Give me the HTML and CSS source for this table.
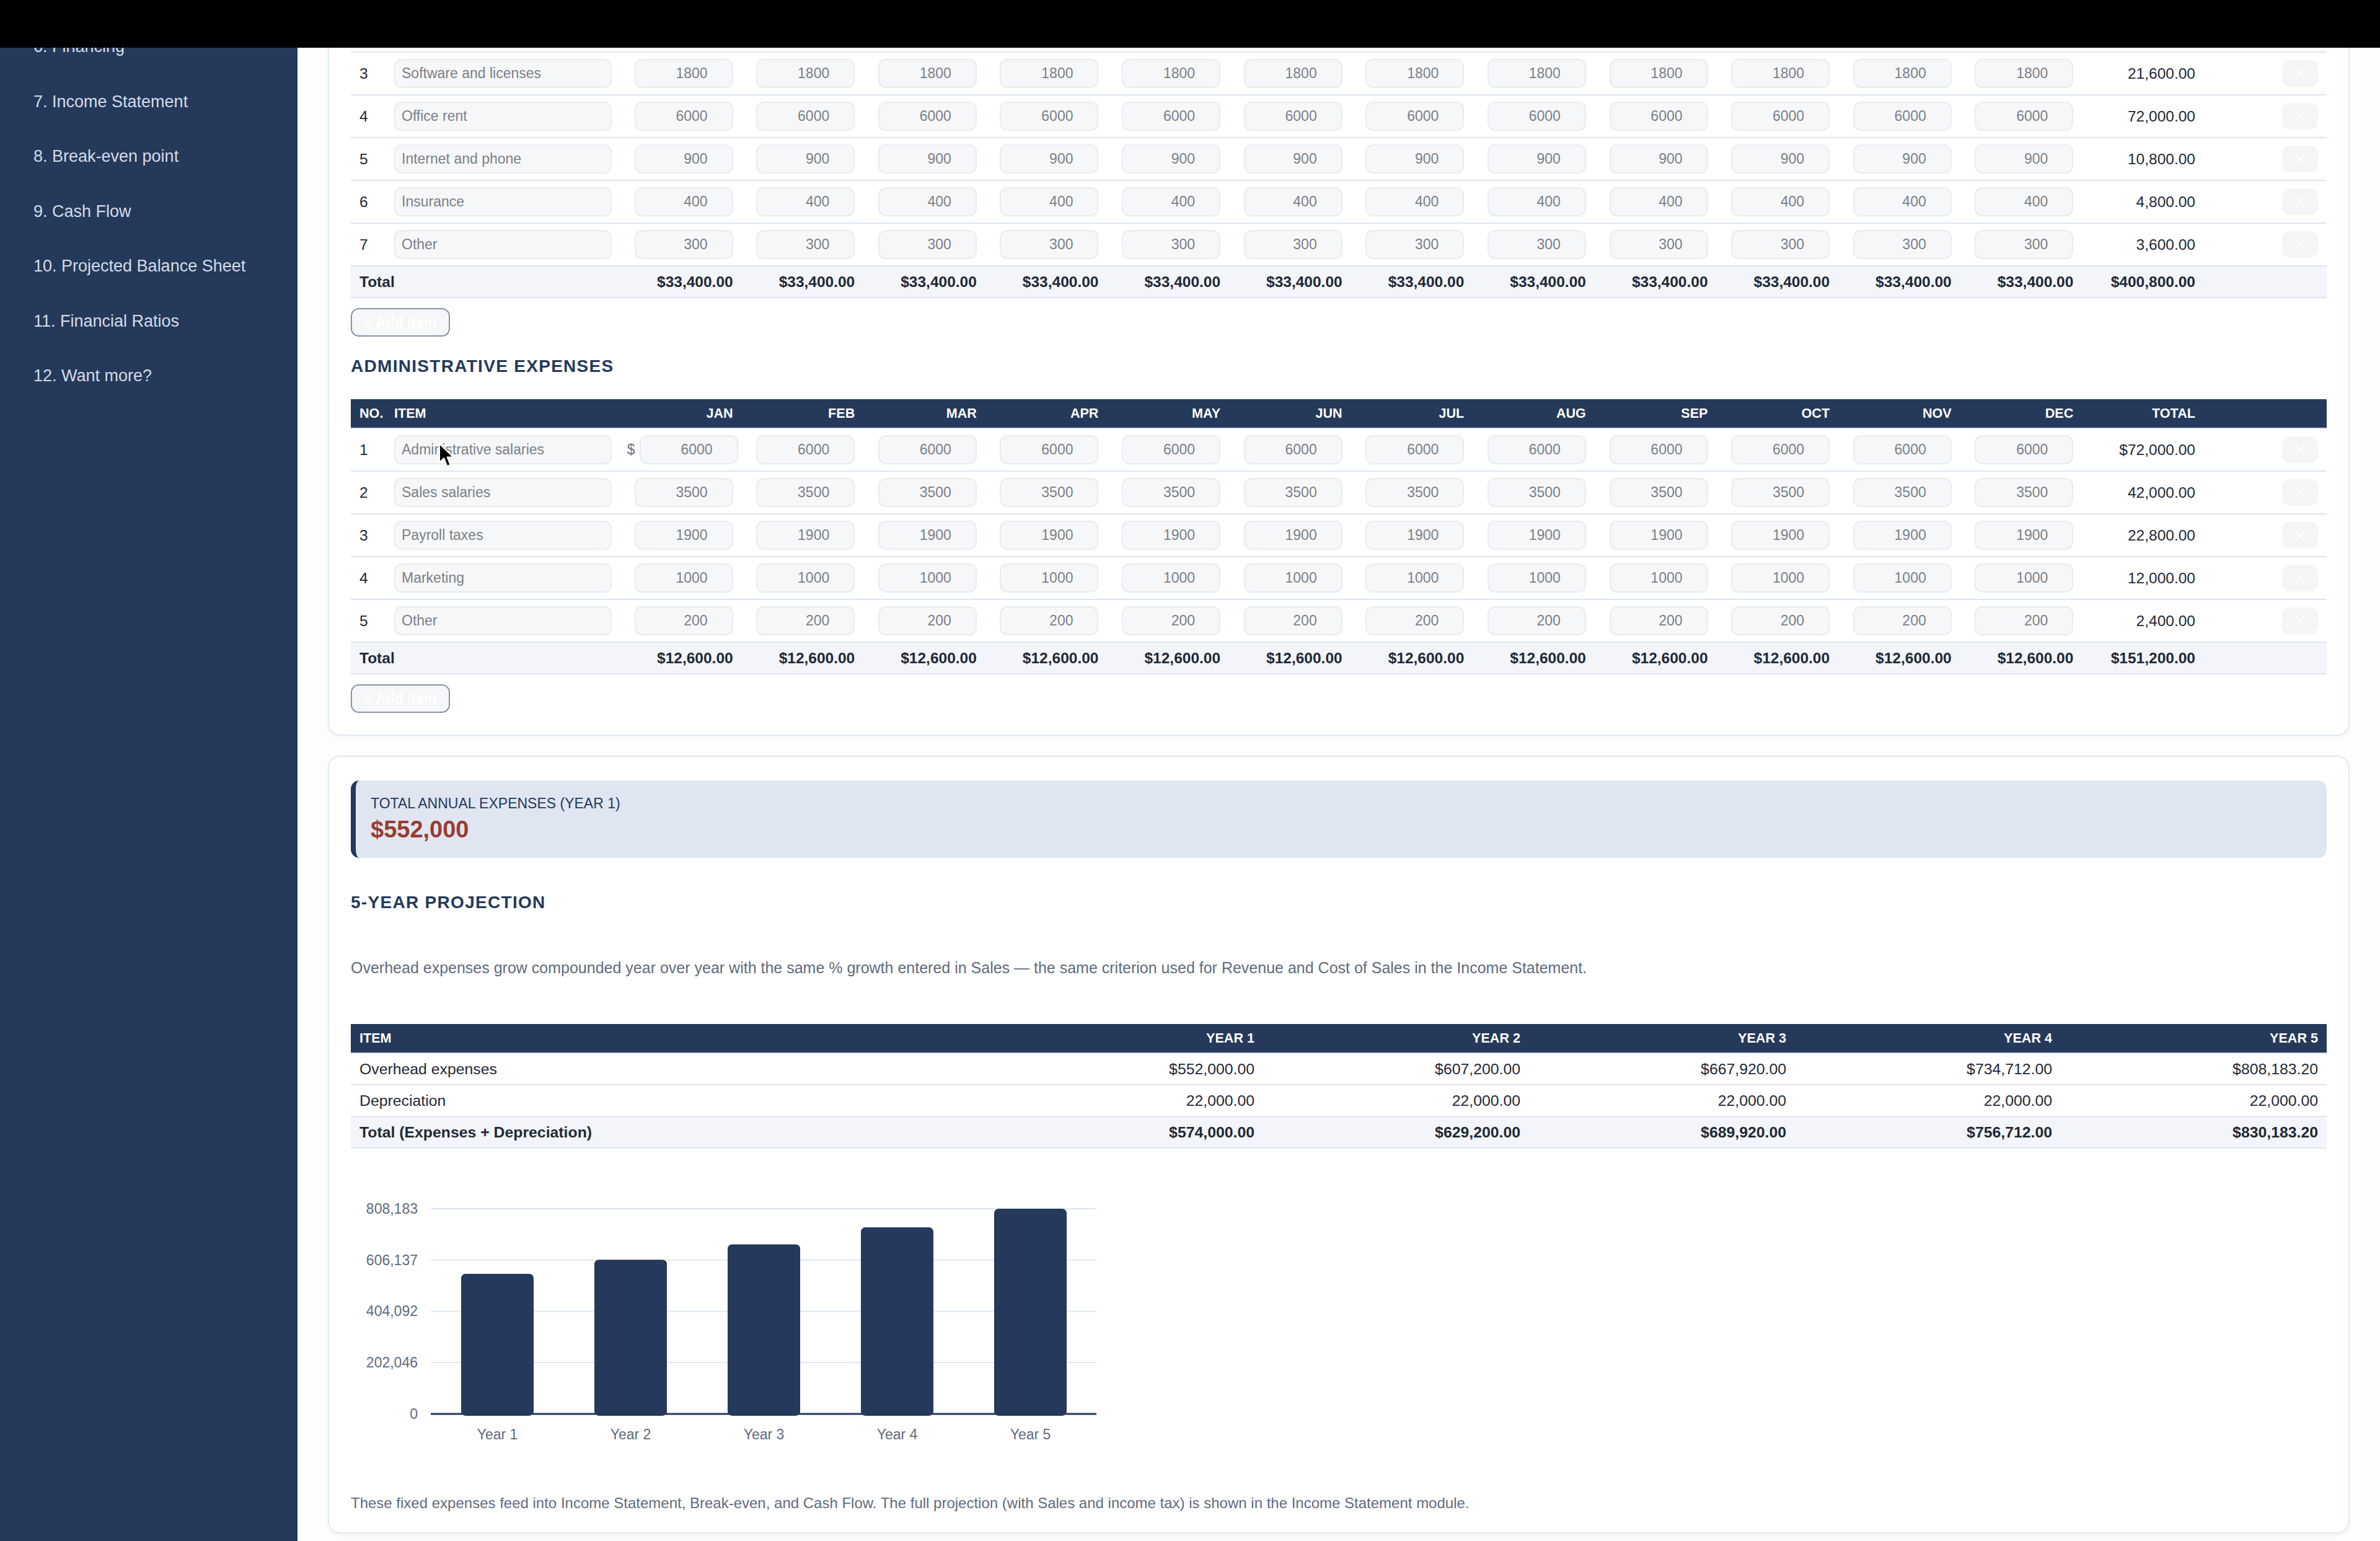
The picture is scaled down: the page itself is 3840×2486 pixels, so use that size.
FILE: index.html
```html
<!DOCTYPE html>
<html lang="en">
<head>
<meta charset="utf-8">
<title>Overhead Expenses</title>
<link rel="stylesheet" href="styles.css">
</head>
<body>
<div class="topbar"></div>
<div class="app">
  <aside class="sidebar">
    <ul class="nav">
      <li>6. Financing</li>
      <li>7. Income Statement</li>
      <li>8. Break-even point</li>
      <li>9. Cash Flow</li>
      <li>10. Projected Balance Sheet</li>
      <li>11. Financial Ratios</li>
      <li>12. Want more?</li>
    </ul>
  </aside>
  <main class="main">
    <section class="card card-first">
      <table class="grid">
        <colgroup>
          <col class="c-no"><col class="c-item">
          <col class="c-m"><col class="c-m"><col class="c-m"><col class="c-m"><col class="c-m"><col class="c-m">
          <col class="c-m"><col class="c-m"><col class="c-m"><col class="c-m"><col class="c-m"><col class="c-m">
          <col class="c-m"><col class="c-del">
        </colgroup>
        <tbody>
          <tr class="first">
            <td class="no">3</td><td class="item"><input class="in-item" value="Software and licenses"></td>
            <td class="m"><input class="in-num" value="1800"></td><td class="m"><input class="in-num" value="1800"></td><td class="m"><input class="in-num" value="1800"></td><td class="m"><input class="in-num" value="1800"></td><td class="m"><input class="in-num" value="1800"></td><td class="m"><input class="in-num" value="1800"></td>
            <td class="m"><input class="in-num" value="1800"></td><td class="m"><input class="in-num" value="1800"></td><td class="m"><input class="in-num" value="1800"></td><td class="m"><input class="in-num" value="1800"></td><td class="m"><input class="in-num" value="1800"></td><td class="m"><input class="in-num" value="1800"></td>
            <td class="tot">21,600.00</td><td class="del"><button class="del-btn"><svg viewBox="0 0 20 20" class="x-ico"><path d="M3 3L17 17M17 3L3 17"/></svg></button></td>
          </tr>
          <tr>
            <td class="no">4</td><td class="item"><input class="in-item" value="Office rent"></td>
            <td class="m"><input class="in-num" value="6000"></td><td class="m"><input class="in-num" value="6000"></td><td class="m"><input class="in-num" value="6000"></td><td class="m"><input class="in-num" value="6000"></td><td class="m"><input class="in-num" value="6000"></td><td class="m"><input class="in-num" value="6000"></td>
            <td class="m"><input class="in-num" value="6000"></td><td class="m"><input class="in-num" value="6000"></td><td class="m"><input class="in-num" value="6000"></td><td class="m"><input class="in-num" value="6000"></td><td class="m"><input class="in-num" value="6000"></td><td class="m"><input class="in-num" value="6000"></td>
            <td class="tot">72,000.00</td><td class="del"><button class="del-btn"><svg viewBox="0 0 20 20" class="x-ico"><path d="M3 3L17 17M17 3L3 17"/></svg></button></td>
          </tr>
          <tr>
            <td class="no">5</td><td class="item"><input class="in-item" value="Internet and phone"></td>
            <td class="m"><input class="in-num" value="900"></td><td class="m"><input class="in-num" value="900"></td><td class="m"><input class="in-num" value="900"></td><td class="m"><input class="in-num" value="900"></td><td class="m"><input class="in-num" value="900"></td><td class="m"><input class="in-num" value="900"></td>
            <td class="m"><input class="in-num" value="900"></td><td class="m"><input class="in-num" value="900"></td><td class="m"><input class="in-num" value="900"></td><td class="m"><input class="in-num" value="900"></td><td class="m"><input class="in-num" value="900"></td><td class="m"><input class="in-num" value="900"></td>
            <td class="tot">10,800.00</td><td class="del"><button class="del-btn"><svg viewBox="0 0 20 20" class="x-ico"><path d="M3 3L17 17M17 3L3 17"/></svg></button></td>
          </tr>
          <tr>
            <td class="no">6</td><td class="item"><input class="in-item" value="Insurance"></td>
            <td class="m"><input class="in-num" value="400"></td><td class="m"><input class="in-num" value="400"></td><td class="m"><input class="in-num" value="400"></td><td class="m"><input class="in-num" value="400"></td><td class="m"><input class="in-num" value="400"></td><td class="m"><input class="in-num" value="400"></td>
            <td class="m"><input class="in-num" value="400"></td><td class="m"><input class="in-num" value="400"></td><td class="m"><input class="in-num" value="400"></td><td class="m"><input class="in-num" value="400"></td><td class="m"><input class="in-num" value="400"></td><td class="m"><input class="in-num" value="400"></td>
            <td class="tot">4,800.00</td><td class="del"><button class="del-btn"><svg viewBox="0 0 20 20" class="x-ico"><path d="M3 3L17 17M17 3L3 17"/></svg></button></td>
          </tr>
          <tr>
            <td class="no">7</td><td class="item"><input class="in-item" value="Other"></td>
            <td class="m"><input class="in-num" value="300"></td><td class="m"><input class="in-num" value="300"></td><td class="m"><input class="in-num" value="300"></td><td class="m"><input class="in-num" value="300"></td><td class="m"><input class="in-num" value="300"></td><td class="m"><input class="in-num" value="300"></td>
            <td class="m"><input class="in-num" value="300"></td><td class="m"><input class="in-num" value="300"></td><td class="m"><input class="in-num" value="300"></td><td class="m"><input class="in-num" value="300"></td><td class="m"><input class="in-num" value="300"></td><td class="m"><input class="in-num" value="300"></td>
            <td class="tot">3,600.00</td><td class="del"><button class="del-btn"><svg viewBox="0 0 20 20" class="x-ico"><path d="M3 3L17 17M17 3L3 17"/></svg></button></td>
          </tr>
          <tr class="total-row">
            <td class="t-label" colspan="2">Total</td>
            <td>$33,400.00</td><td>$33,400.00</td><td>$33,400.00</td><td>$33,400.00</td><td>$33,400.00</td><td>$33,400.00</td>
            <td>$33,400.00</td><td>$33,400.00</td><td>$33,400.00</td><td>$33,400.00</td><td>$33,400.00</td><td>$33,400.00</td>
            <td>$400,800.00</td><td class="t-empty"></td>
          </tr>
        </tbody>
      </table>
      <button class="add-btn">+ Add item</button>

      <h2 class="section-title">ADMINISTRATIVE EXPENSES</h2>
      <table class="grid">
        <colgroup>
          <col class="c-no"><col class="c-item">
          <col class="c-m"><col class="c-m"><col class="c-m"><col class="c-m"><col class="c-m"><col class="c-m">
          <col class="c-m"><col class="c-m"><col class="c-m"><col class="c-m"><col class="c-m"><col class="c-m">
          <col class="c-m"><col class="c-del">
        </colgroup>
        <thead>
          <tr>
            <th class="h-no">NO.</th><th class="h-item">ITEM</th>
            <th>JAN</th><th>FEB</th><th>MAR</th><th>APR</th><th>MAY</th><th>JUN</th>
            <th>JUL</th><th>AUG</th><th>SEP</th><th>OCT</th><th>NOV</th><th>DEC</th>
            <th>TOTAL</th><th class="h-del"></th>
          </tr>
        </thead>
        <tbody>
          <tr>
            <td class="no">1</td><td class="item item-hover"><input class="in-item" value="Administrative salaries"><svg class="cursor" viewBox="0 0 14 21" width="28" height="42"><path d="M1 1L1 16L4.6 12.6L7.2 19L9.8 17.9L7.3 11.7L12.2 11.7Z"/></svg></td>
            <td class="m"><div class="cur"><span class="cur-sign">$</span><input class="in-num in-shift" value="6000"></div></td><td class="m"><input class="in-num" value="6000"></td><td class="m"><input class="in-num" value="6000"></td><td class="m"><input class="in-num" value="6000"></td><td class="m"><input class="in-num" value="6000"></td><td class="m"><input class="in-num" value="6000"></td>
            <td class="m"><input class="in-num" value="6000"></td><td class="m"><input class="in-num" value="6000"></td><td class="m"><input class="in-num" value="6000"></td><td class="m"><input class="in-num" value="6000"></td><td class="m"><input class="in-num" value="6000"></td><td class="m"><input class="in-num" value="6000"></td>
            <td class="tot">$72,000.00</td><td class="del"><button class="del-btn"><svg viewBox="0 0 20 20" class="x-ico"><path d="M3 3L17 17M17 3L3 17"/></svg></button></td>
          </tr>
          <tr>
            <td class="no">2</td><td class="item"><input class="in-item" value="Sales salaries"></td>
            <td class="m"><input class="in-num" value="3500"></td><td class="m"><input class="in-num" value="3500"></td><td class="m"><input class="in-num" value="3500"></td><td class="m"><input class="in-num" value="3500"></td><td class="m"><input class="in-num" value="3500"></td><td class="m"><input class="in-num" value="3500"></td>
            <td class="m"><input class="in-num" value="3500"></td><td class="m"><input class="in-num" value="3500"></td><td class="m"><input class="in-num" value="3500"></td><td class="m"><input class="in-num" value="3500"></td><td class="m"><input class="in-num" value="3500"></td><td class="m"><input class="in-num" value="3500"></td>
            <td class="tot">42,000.00</td><td class="del"><button class="del-btn"><svg viewBox="0 0 20 20" class="x-ico"><path d="M3 3L17 17M17 3L3 17"/></svg></button></td>
          </tr>
          <tr>
            <td class="no">3</td><td class="item"><input class="in-item" value="Payroll taxes"></td>
            <td class="m"><input class="in-num" value="1900"></td><td class="m"><input class="in-num" value="1900"></td><td class="m"><input class="in-num" value="1900"></td><td class="m"><input class="in-num" value="1900"></td><td class="m"><input class="in-num" value="1900"></td><td class="m"><input class="in-num" value="1900"></td>
            <td class="m"><input class="in-num" value="1900"></td><td class="m"><input class="in-num" value="1900"></td><td class="m"><input class="in-num" value="1900"></td><td class="m"><input class="in-num" value="1900"></td><td class="m"><input class="in-num" value="1900"></td><td class="m"><input class="in-num" value="1900"></td>
            <td class="tot">22,800.00</td><td class="del"><button class="del-btn"><svg viewBox="0 0 20 20" class="x-ico"><path d="M3 3L17 17M17 3L3 17"/></svg></button></td>
          </tr>
          <tr>
            <td class="no">4</td><td class="item"><input class="in-item" value="Marketing"></td>
            <td class="m"><input class="in-num" value="1000"></td><td class="m"><input class="in-num" value="1000"></td><td class="m"><input class="in-num" value="1000"></td><td class="m"><input class="in-num" value="1000"></td><td class="m"><input class="in-num" value="1000"></td><td class="m"><input class="in-num" value="1000"></td>
            <td class="m"><input class="in-num" value="1000"></td><td class="m"><input class="in-num" value="1000"></td><td class="m"><input class="in-num" value="1000"></td><td class="m"><input class="in-num" value="1000"></td><td class="m"><input class="in-num" value="1000"></td><td class="m"><input class="in-num" value="1000"></td>
            <td class="tot">12,000.00</td><td class="del"><button class="del-btn"><svg viewBox="0 0 20 20" class="x-ico"><path d="M3 3L17 17M17 3L3 17"/></svg></button></td>
          </tr>
          <tr>
            <td class="no">5</td><td class="item"><input class="in-item" value="Other"></td>
            <td class="m"><input class="in-num" value="200"></td><td class="m"><input class="in-num" value="200"></td><td class="m"><input class="in-num" value="200"></td><td class="m"><input class="in-num" value="200"></td><td class="m"><input class="in-num" value="200"></td><td class="m"><input class="in-num" value="200"></td>
            <td class="m"><input class="in-num" value="200"></td><td class="m"><input class="in-num" value="200"></td><td class="m"><input class="in-num" value="200"></td><td class="m"><input class="in-num" value="200"></td><td class="m"><input class="in-num" value="200"></td><td class="m"><input class="in-num" value="200"></td>
            <td class="tot">2,400.00</td><td class="del"><button class="del-btn"><svg viewBox="0 0 20 20" class="x-ico"><path d="M3 3L17 17M17 3L3 17"/></svg></button></td>
          </tr>
          <tr class="total-row">
            <td class="t-label" colspan="2">Total</td>
            <td>$12,600.00</td><td>$12,600.00</td><td>$12,600.00</td><td>$12,600.00</td><td>$12,600.00</td><td>$12,600.00</td>
            <td>$12,600.00</td><td>$12,600.00</td><td>$12,600.00</td><td>$12,600.00</td><td>$12,600.00</td><td>$12,600.00</td>
            <td>$151,200.00</td><td class="t-empty"></td>
          </tr>
        </tbody>
      </table>
      <button class="add-btn">+ Add item</button>
    </section>

    <section class="card card-second">
      <div class="summary">
        <div class="summary-label">TOTAL ANNUAL EXPENSES (YEAR 1)</div>
        <div class="summary-value">$552,000</div>
      </div>

      <h2 class="section-title proj-title">5-YEAR PROJECTION</h2>
      <p class="note">Overhead expenses grow compounded year over year with the same % growth entered in Sales — the same criterion used for Revenue and Cost of Sales in the Income Statement.</p>

      <table class="proj">
        <colgroup><col class="p-item"><col class="p-y"><col class="p-y"><col class="p-y"><col class="p-y"><col class="p-y"></colgroup>
        <thead>
          <tr><th class="ph-item">ITEM</th><th>YEAR 1</th><th>YEAR 2</th><th>YEAR 3</th><th>YEAR 4</th><th>YEAR 5</th></tr>
        </thead>
        <tbody>
          <tr><td class="pi">Overhead expenses</td><td>$552,000.00</td><td>$607,200.00</td><td>$667,920.00</td><td>$734,712.00</td><td>$808,183.20</td></tr>
          <tr><td class="pi">Depreciation</td><td>22,000.00</td><td>22,000.00</td><td>22,000.00</td><td>22,000.00</td><td>22,000.00</td></tr>
          <tr class="p-total"><td class="pi">Total (Expenses + Depreciation)</td><td>$574,000.00</td><td>$629,200.00</td><td>$689,920.00</td><td>$756,712.00</td><td>$830,183.20</td></tr>
        </tbody>
      </table>

      <svg class="chart" width="1300" height="440" viewBox="0 0 1300 440">
        <g class="grid-lines">
          <line x1="129" y1="50" x2="1203" y2="50"/>
          <line x1="129" y1="132.75" x2="1203" y2="132.75"/>
          <line x1="129" y1="215.5" x2="1203" y2="215.5"/>
          <line x1="129" y1="298.25" x2="1203" y2="298.25"/>
        </g>
        <g class="y-labels">
          <text x="108" y="58">808,183</text>
          <text x="108" y="141">606,137</text>
          <text x="108" y="223">404,092</text>
          <text x="108" y="306">202,046</text>
          <text x="108" y="389">0</text>
        </g>
        <g class="bars">
          <rect x="178" y="154.9" width="117" height="229" rx="7"/>
          <rect x="393" y="132.3" width="117" height="251.6" rx="7"/>
          <rect x="608" y="107.4" width="117" height="276.5" rx="7"/>
          <rect x="823" y="80.1" width="117" height="303.8" rx="7"/>
          <rect x="1038" y="50" width="117" height="333.9" rx="7"/>
        </g>
        <line class="axis" x1="129" y1="381" x2="1203" y2="381"/>
        <g class="x-labels">
          <text x="236.5" y="422">Year 1</text>
          <text x="451.5" y="422">Year 2</text>
          <text x="666.5" y="422">Year 3</text>
          <text x="881.5" y="422">Year 4</text>
          <text x="1096.5" y="422">Year 5</text>
        </g>
      </svg>

      <p class="foot">These fixed expenses feed into Income Statement, Break-even, and Cash Flow. The full projection (with Sales and income tax) is shown in the Income Statement module.</p>
    </section>
  </main>
</div>
</body>
</html>
```

FILE: styles.css
```css
* { box-sizing: border-box; }

html, body {
  margin: 0;
  padding: 0;
  width: 3840px;
  height: 2486px;
  overflow: hidden;
  background: #ffffff;
  font-family: "Liberation Sans", Arial, Helvetica, sans-serif;
  color: #1f2937;
}

.topbar {
  height: 77px;
  background: #000000;
}

.app {
  display: flex;
  height: 2409px;
}

.sidebar {
  flex: 0 0 480px;
  background: #25395b;
  overflow: hidden;
}

.nav {
  list-style: none;
  margin: -46px 0 0 0;
  padding: 0;
}

.nav li {
  height: 88.5px;
  line-height: 88.5px;
  padding-left: 54px;
  font-size: 27px;
  color: #d4dce8;
  white-space: nowrap;
}

.main {
  flex: 1 1 auto;
  overflow: hidden;
  background: #fdfdfe;
}

.card {
  margin: 0 49px;
  background: #ffffff;
  border: 2px solid #e2e8f2;
  border-radius: 20px;
  box-shadow: 0 2px 6px rgba(30, 50, 90, 0.05);
  padding: 0 35px 35px 35px;
}

.card-first {
  margin-top: -40px;
  padding-top: 44px;
}

.card-second {
  margin-top: 32px;
  padding-top: 38px;
  padding-bottom: 33px;
}

/* ---------- editable grid tables ---------- */
.grid {
  width: 3188px;
  table-layout: fixed;
  border-collapse: separate;
  border-spacing: 0;
}

.c-no { width: 56px; }
.c-item { width: 378px; }
.c-m { width: 196.6px; }
.c-del { width: 198px; }

.grid th {
  background: #25395b;
  color: #ffffff;
  font-size: 21.6px;
  font-weight: 700;
  line-height: 46px;
  height: 46px;
  padding: 0 14px 0 0;
  text-align: right;
  border-bottom: 2px solid #dde5f0;
  white-space: nowrap;
}

.grid th.h-no,
.grid th.h-item {
  text-align: left;
  padding-left: 14px;
}

.grid td {
  padding: 10px 14px 10px 0;
  border-bottom: 2px solid #dde5f0;
  vertical-align: middle;
  font-size: 24.5px;
  color: #1f2937;
  white-space: nowrap;
}

.grid tr.first td {
  border-top: 2px solid #dde5f0;
}

.grid td.no {
  padding-left: 14px;
}

.grid td.item {
  padding: 10px 13px 10px 14px;
}

.grid td.item-hover {
  position: relative;
}

.cursor {
  position: absolute;
  left: 85px;
  top: 22px;
  fill: #000000;
  stroke: #ffffff;
  stroke-width: 1;
  stroke-linejoin: round;
}

.grid td.tot {
  text-align: right;
}

.in-item,
.in-num {
  display: block;
  height: 47px;
  border: 2px solid #e7ecf4;
  background: #f6f7f8;
  border-radius: 12px;
  font-family: "Liberation Sans", Arial, Helvetica, sans-serif;
  font-size: 23px;
  color: #7b8089;
  outline: none;
}

.in-item {
  width: 100%;
  padding: 0 10px;
  text-align: left;
}

.in-num {
  width: 159px;
  margin-left: auto;
  padding: 0 39px 0 6px;
  text-align: right;
}

.cur {
  display: flex;
  align-items: center;
  justify-content: flex-end;
  gap: 7px;
}

.cur-sign {
  font-size: 23px;
  color: #6b7486;
}

.in-shift {
  margin-left: 0;
  margin-right: -8px;
}

.grid td.del {
  padding-right: 14px;
}

.del-btn {
  display: flex;
  align-items: center;
  justify-content: center;
  width: 58px;
  height: 43px;
  margin-left: auto;
  border: none;
  border-radius: 12px;
  background: #f4f5f7;
  padding: 0;
}

.x-ico {
  width: 20px;
  height: 20px;
  fill: none;
  stroke: #ffffff;
  stroke-width: 1.6;
}

.total-row td {
  background: #f3f5fa;
  font-weight: 700;
  text-align: right;
  line-height: 25px;
  padding: 12px 14px 12px 0;
}

.total-row td.t-label {
  text-align: left;
  padding-left: 14px;
}

.add-btn {
  display: block;
  width: 160px;
  height: 46px;
  margin-top: 16px;
  padding: 0 0 0 19px;
  text-align: left;
  border: 2px solid #8792a7;
  border-radius: 13px;
  background: #f6f7f9;
  color: #ffffff;
  font-family: "Liberation Sans", Arial, Helvetica, sans-serif;
  font-size: 23px;
  font-weight: 700;
}

.section-title {
  margin: 32px 0 37px 0;
  font-size: 28px;
  line-height: 32px;
  font-weight: 700;
  letter-spacing: 1.3px;
  color: #24395b;
}

/* ---------- summary ---------- */
.summary {
  background: #dfe6f2;
  border-left: 8px solid #24395b;
  border-radius: 14px;
  padding: 23px 24px 24px 24px;
}

.summary-label {
  font-size: 23px;
  line-height: 28px;
  color: #24395b;
}

.summary-value {
  margin-top: 6px;
  font-size: 38px;
  line-height: 44px;
  font-weight: 700;
  color: #9b3b2e;
}

.proj-title {
  margin: 56px 0 0 0;
}

.note {
  margin: 74px 0 0 0;
  font-size: 25px;
  line-height: 30px;
  color: #5f6b7d;
}

/* ---------- projection table ---------- */
.proj {
  margin-top: 76px;
  width: 3188px;
  table-layout: fixed;
  border-collapse: separate;
  border-spacing: 0;
}

.p-item { width: 1043px; }
.p-y { width: 429px; }

.proj th {
  background: #25395b;
  color: #ffffff;
  font-size: 21.6px;
  font-weight: 700;
  line-height: 46px;
  height: 46px;
  padding: 0 14px;
  text-align: right;
  border-bottom: 2px solid #dde5f0;
}

.proj th.ph-item { text-align: left; }

.proj td {
  font-size: 24.8px;
  line-height: 29px;
  padding: 10px 14px;
  text-align: right;
  color: #1f2937;
  border-bottom: 2px solid #dde5f0;
  white-space: nowrap;
}

.proj td.pi { text-align: left; }

.p-total td {
  background: #f3f5fa;
  font-weight: 700;
}

/* ---------- chart ---------- */
.chart {
  display: block;
  margin-top: 47px;
}

.grid-lines line {
  stroke: #e0e7f1;
  stroke-width: 2;
}

.axis {
  stroke: #24395b;
  stroke-width: 3;
}

.bars rect {
  fill: #24395b;
}

.y-labels text,
.x-labels text {
  font-family: "Liberation Sans", Arial, Helvetica, sans-serif;
  font-size: 23px;
  fill: #5f6b7d;
}

.y-labels text { text-anchor: end; }
.x-labels text { text-anchor: middle; }

.foot {
  margin: 71px 0 0 0;
  font-size: 24px;
  line-height: 28px;
  color: #5f6b7d;
}
```
